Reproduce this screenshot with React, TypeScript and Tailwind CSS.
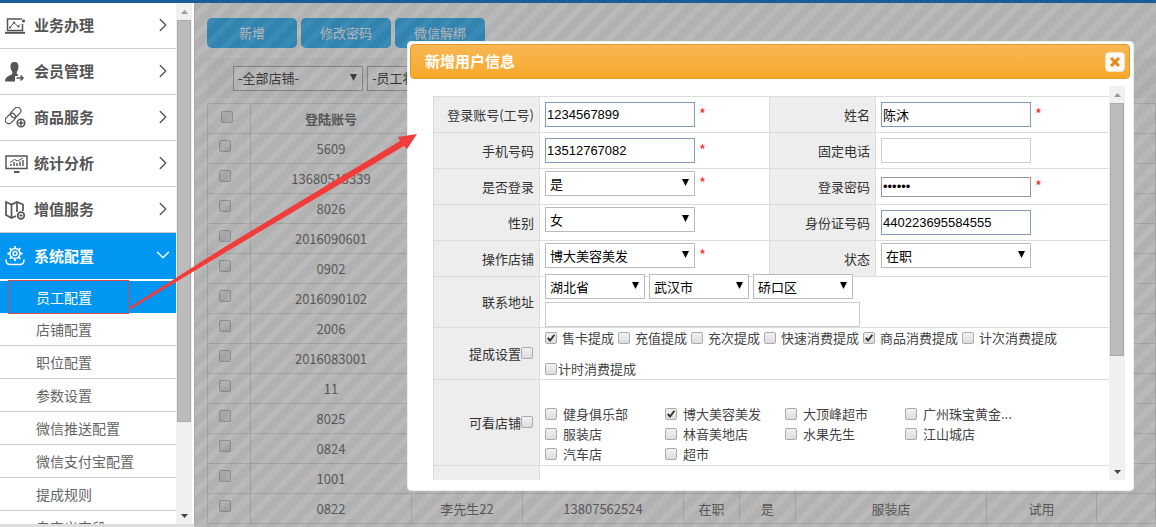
import React from "react";
import { ChevronDown, ChevronRight } from "lucide-react";

const PRESENTATION = { fill: "none", stroke: "currentColor", strokeWidth: 1.5 } as const;

function BoardIcon() {
  return (
    <svg width="21" height="18" viewBox="0 0 21 18" {...PRESENTATION}>
      <path d="M17 2H2.500V13.500H17.500V7" />
      <path d="M0 15.800H20" strokeWidth="2" />
      <path d="M5 10.500L9 5.500L13 9.500L15 7.500" strokeWidth="1" />
      <g fill="currentColor" stroke="none">
        <circle cx="5" cy="10.500" r="1.100" />
        <circle cx="9" cy="5.500" r="1.100" />
        <circle cx="13.500" cy="9.500" r="1.100" />
        <circle cx="18.500" cy="4" r="1.600" />
      </g>
    </svg>
  );
}

function MemberIcon() {
  return (
    <svg width="20" height="20" viewBox="0 0 20 20">
      <path
        d="M9.500 0C6.500 0 5.300 2 5.500 4.800C5.600 7 6.400 8.800 7.300 9.800V12C6 13.500 0 13.800 0 19.500H10V14H13V12.500L11.800 12V9.800C12.800 8.800 13.500 7 13.500 4.800C13.600 2 12.500 0 9.500 0Z"
        fill="currentColor"
      />
      <path d="M11.500 16H18M15.500 13.500L18 16L15.500 18.500" fill="none" stroke="currentColor" strokeWidth="1.500" />
    </svg>
  );
}

function LinkIcon() {
  return (
    <svg width="21" height="21" viewBox="0 0 21 21" {...PRESENTATION} strokeWidth="1.200">
      <rect x="5" y="2" width="11.500" height="7" rx="3.500" transform="rotate(-45 10.700 5.500)" />
      <rect x="-.3" y="8" width="11.500" height="7" rx="3.500" transform="rotate(-45 5.500 11.500)" />
      <circle cx="16" cy="16" r="3.800" strokeWidth="1.600" />
      <path d="M16 13.500V18.500M13.500 16H18.500" strokeWidth="1.600" />
    </svg>
  );
}

function MonitorIcon() {
  return (
    <svg width="23" height="18" viewBox="0 0 23 18" {...PRESENTATION}>
      <rect x="1" y="1" width="21" height="12.500" />
      <path d="M9 17H14.500" strokeWidth="2" />
      <path d="M6 11V9M9 11V7M12 11V8M15 11V6.500M18 11V5" strokeWidth="1.400" />
      <path d="M5 7.500L9.500 4.500L12.500 6L18 3" strokeWidth="1" />
    </svg>
  );
}

function MapIcon() {
  return (
    <svg width="21" height="20" viewBox="0 0 21 20" {...PRESENTATION} strokeWidth="1.700">
      <path d="M11 16L6.500 18L1 15V2L6.500 4.500L12 2L18 4.500V11" />
      <path d="M6.500 4.500V18M12 2V12" />
      <circle cx="16" cy="15.500" r="3.300" />
      <path d="M16 14V17M14.500 15.500H17.500" strokeWidth="1" />
    </svg>
  );
}

function GearIcon() {
  return (
    <svg width="20" height="20" viewBox="0 0 20 20" {...PRESENTATION}>
      <circle cx="10" cy="7.500" r="5" />
      <circle cx="10" cy="7.500" r="2" />
      <path
        d="M10 0V2.500M10 12.500V15M2.500 7.500H5M15 7.500H17.500M4.700 2.200L6.400 3.900M13.600 11.100L15.300 12.800M4.700 12.800L6.400 11.100M13.600 3.900L15.300 2.200"
        strokeWidth="1.800"
      />
      <path d="M1 13.500C1 16.500 2 18.500 5 18.500H15C18 18.500 19 16.500 19 13.500" />
    </svg>
  );
}

const MENU = [
  { label: "业务办理", Icon: BoardIcon },
  { label: "会员管理", Icon: MemberIcon },
  { label: "商品服务", Icon: LinkIcon },
  { label: "统计分析", Icon: MonitorIcon },
  { label: "增值服务", Icon: MapIcon },
];

const SUBMENU = ["店铺配置", "职位配置", "参数设置", "微信推送配置", "微信支付宝配置", "提成规则", "自定义字段"];

function Triangle({ up = false }: { up?: boolean }) {
  return (
    <svg width="7" height="4" viewBox="0 0 7 4" fill="currentColor">
      <path d={up ? "M0 4L3.500 0L7 4Z" : "M0 0H7L3.500 4Z"} />
    </svg>
  );
}

function ScrollBar({ thumb }: { thumb: string }) {
  return (
    <div aria-hidden="true" className="flex w-4 shrink-0 flex-col items-center bg-[#f0f0f0]">
      <span className="flex h-[17px] shrink-0 items-center text-[#999]">
        <Triangle up />
      </span>
      <div className="flex min-h-0 w-full flex-1 flex-col px-px">
        <div className={`border border-[#aaa] bg-[#bcbcbc] ${thumb}`} />
      </div>
      <span className="flex h-[17px] shrink-0 items-center text-[#444]">
        <Triangle />
      </span>
    </div>
  );
}

function Check({ label, checked = false }: { label?: string; checked?: boolean }) {
  return (
    <span className="relative flex size-[13px] shrink-0">
      <input
        type="checkbox"
        aria-label={label}
        defaultChecked={checked}
        className="peer size-3 appearance-none rounded-[2px] border border-[#aaa] bg-linear-to-b from-[#f2f2f2] to-[#dcdcdc]"
      />
      <svg
        viewBox="0 0 13 13"
        className="pointer-events-none absolute inset-0 hidden size-3 fill-none stroke-[#333] stroke-2 peer-checked:block"
      >
        <path d="M3 6.500L5.500 9.200L10.200 3" />
      </svg>
    </span>
  );
}

function CheckItem({ text, checked, gap = "gap-1" }: { text: string; checked?: boolean; gap?: string }) {
  return (
    <label className={`flex items-center whitespace-nowrap text-[#444] ${gap}`}>
      <Check checked={checked} />
      {text}
    </label>
  );
}

function Select({ id, label, value, width, tone = "border-[#bbb]" }: {
  id?: string;
  label?: string;
  value: string;
  width: string;
  tone?: string;
}) {
  return (
    <span className={`relative flex h-[25px] shrink-0 ${width}`}>
      <select
        id={id}
        aria-label={label}
        className={`h-[25px] w-full appearance-none border bg-white pl-1 text-[13px] text-black ${tone}`}
      >
        <option>{value}</option>
      </select>
      <svg viewBox="0 0 7 7" className="pointer-events-none absolute top-2 right-[6px] size-[7px] fill-black">
        <path d="M0 0H7L3.500 7Z" />
      </svg>
    </span>
  );
}

function TextInput({ id, value, tone, type = "text", height = "h-[25px]" }: {
  id: string;
  value?: string;
  tone: string;
  type?: string;
  height?: string;
}) {
  return (
    <input
      id={id}
      type={type}
      defaultValue={value}
      className={`w-[150px] border bg-white px-px font-['Liberation_Sans','Noto_Sans_CJK_SC',sans-serif] text-[13px] text-black ${height} ${tone}`}
    />
  );
}

const AUTOFILL = "border-[#7f9db9]";
const PLAIN = "border-[#ccc]";

function Required() {
  return <span className="ml-1 text-[15px] text-[#f03030]">*</span>;
}

function Label({ htmlFor, children, divider = false }: {
  htmlFor?: string;
  children: React.ReactNode;
  divider?: boolean;
}) {
  return (
    <label
      htmlFor={htmlFor}
      className={`flex items-center justify-end border-r border-[#dcdcdc] bg-[#ededed] pr-[5px] whitespace-nowrap text-[#333] ${divider ? "border-l" : ""}`}
    >
      {children}
    </label>
  );
}

const PAIR = "grid h-9 grid-cols-[106px_229fr_107px_233fr] border-b border-[#dcdcdc]";
const WIDE = "grid grid-cols-[106px_1fr] grid-rows-[minmax(0,1fr)] border-b border-[#dcdcdc]";
const FIELD = "flex items-center pl-[5px]";
const SELECT_FIELD = "flex items-center pb-[6px] pl-[5px]";

const SHOPS = [
  ["健身俱乐部", "博大美容美发", "大顶峰超市", "广州珠宝黄金..."],
  ["服装店", "林音美地店", "水果先生", "江山城店"],
  ["汽车店", "超市"],
];

function UserForm() {
  return (
    <form className="min-w-0 flex-1 overflow-hidden pt-[10px] pl-[23px] text-[13px]">
      <div className="border-t border-l border-[#dcdcdc]">
        <div className={PAIR}>
          <Label htmlFor="account">登录账号(工号)</Label>
          <div className={FIELD}>
            <TextInput id="account" value="1234567899" tone={AUTOFILL} />
            <Required />
          </div>
          <Label htmlFor="name" divider>姓名</Label>
          <div className={FIELD}>
            <TextInput id="name" value="陈沐" tone={AUTOFILL} />
            <Required />
          </div>
        </div>
        <div className={PAIR}>
          <Label htmlFor="mobile">手机号码</Label>
          <div className={FIELD}>
            <TextInput id="mobile" value="13512767082" tone={AUTOFILL} />
            <Required />
          </div>
          <Label htmlFor="phone" divider>固定电话</Label>
          <div className={FIELD}>
            <TextInput id="phone" tone={PLAIN} />
          </div>
        </div>
        <div className={PAIR}>
          <Label htmlFor="login">是否登录</Label>
          <div className={SELECT_FIELD}>
            <Select id="login" value="是" width="w-[150px]" />
            <Required />
          </div>
          <Label htmlFor="password" divider>登录密码</Label>
          <div className={FIELD}>
            <TextInput id="password" type="password" value="123456" tone="border-[#999]" height="h-5" />
            <Required />
          </div>
        </div>
        <div className={PAIR}>
          <Label htmlFor="gender">性别</Label>
          <div className={SELECT_FIELD}>
            <Select id="gender" value="女" width="w-[150px]" />
          </div>
          <Label htmlFor="idcard" divider>身份证号码</Label>
          <div className={FIELD}>
            <TextInput id="idcard" value="440223695584555" tone={AUTOFILL} />
          </div>
        </div>
        <div className={PAIR}>
          <Label htmlFor="shop">操作店铺</Label>
          <div className={SELECT_FIELD}>
            <Select id="shop" value="博大美容美发" width="w-[150px]" />
            <Required />
          </div>
          <Label htmlFor="status" divider>状态</Label>
          <div className={SELECT_FIELD}>
            <Select id="status" value="在职" width="w-[150px]" />
          </div>
        </div>
        <div className={`${WIDE} h-[51px]`}>
          <Label htmlFor="address">联系地址</Label>
          <div className="flex flex-col justify-end gap-[3px] pl-[5px]">
            <div className="flex gap-1">
              <Select label="省份" value="湖北省" width="w-[100px]" />
              <Select label="城市" value="武汉市" width="w-[100px]" />
              <Select label="区县" value="硚口区" width="w-[100px]" />
            </div>
            <input id="address" className="h-[25px] w-[315px] shrink-0 border border-[#ccc] bg-white px-1" />
          </div>
        </div>
        <div className={`${WIDE} h-[52px]`}>
          <Label>
            提成设置
            <Check />
          </Label>
          <div className="flex flex-col justify-between pl-[5px] leading-5">
            <div className="flex gap-1">
              <CheckItem text="售卡提成" checked />
              <CheckItem text="充值提成" />
              <CheckItem text="充次提成" />
              <CheckItem text="快速消费提成" />
              <CheckItem text="商品消费提成" checked />
              <CheckItem text="计次消费提成" />
            </div>
            <CheckItem text="计时消费提成" gap="gap-0" />
          </div>
        </div>
        <div className={`${WIDE} h-[86px]`}>
          <Label>
            可看店铺
            <Check />
          </Label>
          <div className="flex flex-col pt-6 pl-[5px] leading-5">
            {SHOPS.map((row) => (
              <div key={row[0]} className="grid grid-cols-[120px_120px_120px_1fr]">
                {row.map((shop) => (
                  <CheckItem key={shop} text={shop} checked={shop === "博大美容美发"} gap="gap-[5px]" />
                ))}
              </div>
            ))}
          </div>
        </div>
        <div className="grid h-9 grid-cols-[106px_1fr]">
          <Label>{null}</Label>
        </div>
      </div>
    </form>
  );
}

function Dialog() {
  return (
    <section
      role="dialog"
      aria-labelledby="dialog-title"
      className="absolute top-[41px] right-[22px] left-[407px] flex h-[450px] flex-col rounded-[4px] border border-[#eee] bg-white p-[2px]"
    >
      <header className="mr-px flex h-[35px] shrink-0 items-center justify-between rounded-[4px] border border-[#e09a2c] bg-linear-to-b from-[#f9b752] to-[#f6a828] pr-1 pl-[14px]">
        <h2 id="dialog-title" className="text-[15px] font-bold text-white">新增用户信息</h2>
        <button
          type="button"
          aria-label="关闭"
          className="flex size-5 items-center justify-center rounded-[4px] border border-[#f3e3c3] bg-[#fdfaf4]"
        >
          <svg viewBox="0 0 10 10" className="size-[10px] stroke-[#e48a1b] stroke-3">
            <path d="M1 1L9 9M9 1L1 9" />
          </svg>
        </button>
      </header>
      <div className="mt-[7px] mr-[6px] mb-2 flex min-h-0 flex-1">
        <UserForm />
        <ScrollBar thumb="h-[253px]" />
      </div>
    </section>
  );
}

const ACCOUNTS = ["5609", "13680513339", "8026", "2016090601", "0902", "2016090102", "2006", "2016083001", "11", "8025", "0824", "1001", "0822"];
const LAST_ROW = ["李先生22", "13807562524", "在职", "是", "服装店", "试用", ""];
const CELL = "border border-[#d8d8d8] p-0";

function StaffTable() {
  return (
    <table className="w-full table-fixed border-collapse text-center text-[13px] leading-5 text-[#444]">
      <colgroup>
        <col className="w-[43px]" />
        <col className="w-[161px]" />
        <col className="w-[111px]" />
        <col className="w-[161px]" />
        <col className="w-[56px]" />
        <col className="w-[56px]" />
        <col className="w-[191px]" />
        <col className="w-[110px]" />
        <col />
      </colgroup>
      <thead>
        <tr className="h-[30px]">
          <th className={CELL}>
            <div className="flex justify-center pr-1 pb-[2px]"><Check label="全选" /></div>
          </th>
          <th className={CELL}>登陆账号</th>
          {LAST_ROW.map((_, i) => <th key={i} className={CELL} />)}
        </tr>
      </thead>
      <tbody>
        {ACCOUNTS.map((account) => (
          <tr key={account} className="h-[30px]">
            <td className={CELL}>
              <div className="flex justify-center pr-2 pb-1"><Check label={account} /></div>
            </td>
            <td className={CELL}>{account}</td>
            {LAST_ROW.map((value, i) => (
              <td key={i} className={CELL}>{account === "0822" ? value : ""}</td>
            ))}
          </tr>
        ))}
      </tbody>
    </table>
  );
}

const BUTTON = "h-[30px] w-[90px] rounded-[5px] bg-[#00a2fa] text-[13px] text-white";

function Main() {
  return (
    <main className="relative min-w-0 flex-1 overflow-hidden bg-white pt-[15px] pl-3">
      <div className="flex gap-1">
        <button type="button" className={BUTTON}>新增</button>
        <button type="button" className={BUTTON}>修改密码</button>
        <button type="button" className={BUTTON}>微信解绑</button>
      </div>
      <div className="mt-[10px] mb-[5px] flex h-10 items-center gap-1 bg-[#f6f6f6] pl-[26px]">
        <Select label="店铺" value="-全部店铺-" width="w-[130px]" tone="border-[#999]" />
        <Select label="员工状态" value="-员工状态-" width="w-[130px]" tone="border-[#999]" />
      </div>
      <StaffTable />
      <div className="absolute inset-0 bg-[repeating-linear-gradient(135deg,rgba(100,100,100,0.5)_0px,rgba(100,100,100,0.5)_6px,rgba(116,116,116,0.5)_8px,rgba(116,116,116,0.5)_12px,rgba(100,100,100,0.5)_14px)]" />
    </main>
  );
}

function Sidebar() {
  return (
    <aside className="flex w-[195px] shrink-0 border-r border-b-[3px] border-r-[#aaa] border-b-[#dedede] bg-white">
      <nav className="w-44 overflow-hidden text-[#555]">
        {MENU.map(({ label, Icon }) => (
          <a key={label} href="#" className="flex h-[46px] items-center border-b border-[#ccc] pr-[2px] pl-[5px]">
            <span className="flex w-[29px] shrink-0"><Icon /></span>
            <span className="flex-1 text-[15px] font-bold">{label}</span>
            <ChevronRight size={22} strokeWidth={1.5} className="-translate-y-px" />
          </a>
        ))}
        <a href="#" className="flex h-[46px] items-center bg-[#0096f2] pr-[2px] pl-[5px] text-white">
          <span className="flex w-[29px] shrink-0"><GearIcon /></span>
          <span className="flex-1 text-[15px] font-bold">系统配置</span>
          <ChevronDown size={22} strokeWidth={1.5} className="-translate-y-px" />
        </a>
        <div className="pt-[2px] text-[14px]">
          <a href="#" className="flex h-8 items-center bg-[#0096f2] pl-9 text-white">员工配置</a>
          {SUBMENU.map((label) => (
            <a key={label} href="#" className="flex h-[33px] items-center border-b border-[#ccc] pl-9 text-[#666]">
              {label}
            </a>
          ))}
        </div>
      </nav>
      <ScrollBar thumb="h-[402px]" />
    </aside>
  );
}

export default function App() {
  return (
    <div className="relative flex h-screen flex-col overflow-hidden bg-white font-['Noto_Sans_CJK_SC',sans-serif]">
      <div className="h-[3px] shrink-0 bg-[#1a5e99]" />
      <div className="flex min-h-0 flex-1">
        <Sidebar />
        <Main />
      </div>
      <Dialog />
      <svg width="420" height="320" viewBox="0 0 420 320" className="pointer-events-none absolute top-0 left-0">
        <rect x="8.500" y="280.500" width="120" height="33" fill="none" stroke="#d9474f" />
        <path d="M130 307L223 248L400 141L398 137L417 134L407 149L404 146L226 252L131 309Z" fill="#f23c3c" />
      </svg>
    </div>
  );
}
